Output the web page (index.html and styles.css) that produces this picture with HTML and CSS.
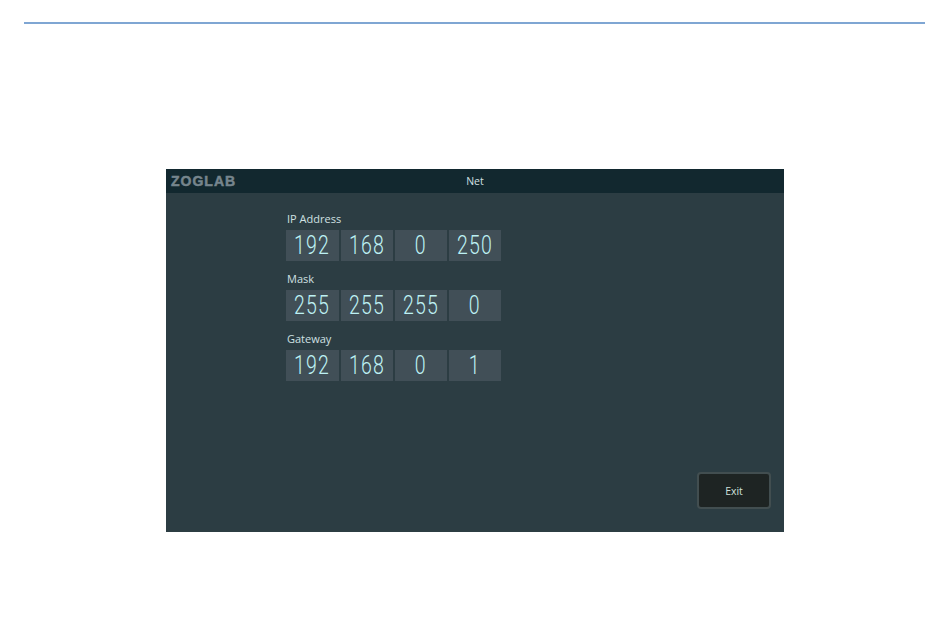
FILE: index.html
```html
<!DOCTYPE html>
<html lang="en">
<head>
<meta charset="utf-8">
<title>Net</title>
<link rel="stylesheet" href="styles.css">
</head>
<body>
<hr class="rule">
<main class="panel">
  <header class="titlebar">
    <span class="logo">ZOGLAB</span>
    <span class="title">Net</span>
  </header>
  <div class="content">
    <section class="field">
      <div class="label">IP Address</div>
      <div class="octets">
        <div class="octet"><span class="digits">192</span></div><div class="octet"><span class="digits">168</span></div><div class="octet"><span class="digits">0</span></div><div class="octet"><span class="digits">250</span></div>
      </div>
    </section>
    <section class="field">
      <div class="label">Mask</div>
      <div class="octets">
        <div class="octet"><span class="digits">255</span></div><div class="octet"><span class="digits">255</span></div><div class="octet"><span class="digits">255</span></div><div class="octet"><span class="digits">0</span></div>
      </div>
    </section>
    <section class="field">
      <div class="label">Gateway</div>
      <div class="octets">
        <div class="octet"><span class="digits">192</span></div><div class="octet"><span class="digits">168</span></div><div class="octet"><span class="digits">0</span></div><div class="octet"><span class="digits">1</span></div>
      </div>
    </section>
    <button class="exit" type="button">Exit</button>
  </div>
</main>
</body>
</html>
```
FILE: styles.css
```css
html, body {
  margin: 0;
  padding: 0;
  background: #fff;
}
body {
  width: 950px;
  height: 641px;
  overflow: hidden;
  font-family: "Open Sans", "Liberation Sans", sans-serif;
}
.rule {
  width: 901px;
  height: 2px;
  margin: 22px 0 0 24px;
  border: 0;
  background: #7fa6d3;
}
.panel {
  width: 618px;
  height: 363px;
  margin: 145px 0 0 166px;
  display: flex;
  flex-direction: column;
  background: #2c3d43;
  color: #cfe0e2;
}
.titlebar {
  height: 24px;
  flex: none;
  display: grid;
  grid-template-columns: 1fr auto 1fr;
  align-items: center;
  background: #12282f;
}
.logo {
  padding-left: 5px;
  font-family: "Liberation Sans", sans-serif;
  font-size: 14px;
  font-weight: 700;
  letter-spacing: 1px;
  color: #76858d;
  -webkit-text-stroke: 0.5px #76858d;
}
.title {
  font-size: 10.5px;
  color: #d3e0e2;
}
.content {
  flex: 1;
  display: flex;
  flex-direction: column;
  gap: 11px;
  padding: 19px 13px 23px 120px;
}
.label {
  height: 18px;
  padding-left: 1px;
  font-size: 11px;
  line-height: 14px;
  color: #cfe0e2;
}
.octets {
  display: flex;
  gap: 2px;
}
.octet {
  width: 52px;
  height: 31px;
  display: flex;
  align-items: center;
  justify-content: center;
  background: #414f57;
}
.octet:first-child {
  width: 53px;
}
.digits {
  display: block;
  transform: scaleX(0.78);
  font-family: "Roboto", sans-serif;
  font-size: 25px;
  font-weight: 300;
  line-height: 31px;
  letter-spacing: 1.5px;
  color: #bdf1f3;
}
.exit {
  width: 74px;
  height: 37px;
  margin-top: auto;
  align-self: flex-end;
  border: 2px solid #424e50;
  border-radius: 4px;
  background: #1e2423;
  color: #cfe0dc;
  font-family: inherit;
  font-size: 10.5px;
  padding: 0;
}
```
